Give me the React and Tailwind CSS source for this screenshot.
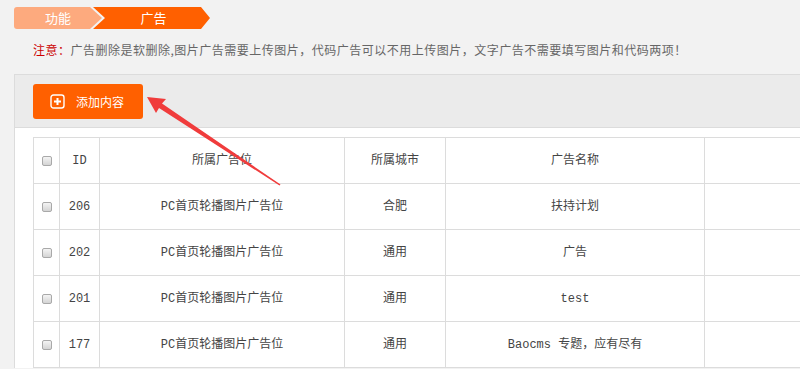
import React from 'react'

const rows = [
  { id: '206', pos: 'PC首页轮播图片广告位', city: '合肥', name: '扶持计划' },
  { id: '202', pos: 'PC首页轮播图片广告位', city: '通用', name: '广告' },
  { id: '201', pos: 'PC首页轮播图片广告位', city: '通用', name: 'test' },
  { id: '177', pos: 'PC首页轮播图片广告位', city: '通用', name: 'Baocms 专题，应有尽有' },
]

const Check = () => (
  <div className="mx-auto h-[10px] w-[10px] rounded-[2px] border border-[#a9a9a9] bg-gradient-to-b from-[#f4f4f4] to-[#d4d4d4]" />
)

const cell = 'border border-[#dcdcdc] text-center align-middle'

const App = () => {
  return (
    <div className="relative h-[369px] w-[800px] overflow-hidden bg-[#f2f2f2] font-['Noto_Sans_CJK_SC',sans-serif] text-[12px]">
      {/* breadcrumb */}
      <div className="flex pl-[14px] pt-[7px]">
        <div className="flex h-[22px] w-[88px] items-center rounded-l-[3px] bg-[#fdaa7e] pl-[31px] text-[13px] text-white [clip-path:polygon(0_0,76px_0,100%_50%,76px_100%,0_100%)]">
          功能
        </div>
        <div className="-ml-[9px] flex h-[22px] w-[117px] items-center justify-center bg-[#ff6000] pl-[4px] text-[13px] text-white [clip-path:polygon(0_0,108px_0,100%_50%,108px_100%,0_100%,12px_50%)]">
          广告
        </div>
      </div>

      {/* notice */}
      <div className="mt-[12px] pl-[33px] leading-[18px] tracking-[0.5px] text-[#666]">
        <span className="text-[#cc0000]">注意：</span>
        广告删除是软删除,图片广告需要上传图片，代码广告可以不用上传图片，文字广告不需要填写图片和代码两项！
      </div>

      {/* panel */}
      <div className="ml-[14px] mt-[15px] w-[900px] border-l border-t border-[#dcdcdc] bg-white">
        <div className="border-b border-[#dcdcdc] bg-[#ebebeb] pb-[8px] pl-[18px] pt-[9px]">
          <button className="flex h-[35px] w-[110px] items-center rounded-[3px] bg-[#ff6000] pl-[17px] text-[12px] text-white">
            <svg width="15" height="15" viewBox="0 0 15 15" fill="none" stroke="white">
              <rect x="1" y="1" width="13" height="13" rx="2.5" strokeWidth="1.4" />
              <path d="M7.5 4v7M4 7.5h7" strokeWidth="2" />
            </svg>
            <span className="ml-[11px]">添加内容</span>
          </button>
        </div>

        <div className="pl-[18px] pt-[9px]">
          <table className="w-[880px] table-fixed border-collapse font-['Liberation_Mono','Noto_Sans_CJK_SC',monospace] text-[12px] text-[#444]">
            <colgroup>
              <col className="w-[26px]" />
              <col className="w-[40px]" />
              <col className="w-[245px]" />
              <col className="w-[101px]" />
              <col className="w-[259px]" />
              <col />
            </colgroup>
            <thead>
              <tr className="h-[46px]">
                <th className={`${cell} font-normal`}>
                  <Check />
                </th>
                <th className={`${cell} font-normal`}>ID</th>
                <th className={`${cell} font-normal`}>所属广告位</th>
                <th className={`${cell} font-normal`}>所属城市</th>
                <th className={`${cell} font-normal`}>广告名称</th>
                <th className={`${cell} font-normal`}></th>
              </tr>
            </thead>
            <tbody>
              {rows.map((r) => (
                <tr key={r.id} className="h-[46px]">
                  <td className={cell}>
                    <Check />
                  </td>
                  <td className={cell}>{r.id}</td>
                  <td className={cell}>{r.pos}</td>
                  <td className={cell}>{r.city}</td>
                  <td className={cell}>{r.name}</td>
                  <td className={cell}></td>
                </tr>
              ))}
            </tbody>
          </table>
        </div>
      </div>

      {/* annotation arrow */}
      <svg className="pointer-events-none absolute left-0 top-0" width="800" height="369">
        <polygon
          points="147,97 166,99 162,103.5 280.5,184.5 279.5,185.5 159,108 156,113"
          fill="#f03c3c"
        />
      </svg>
    </div>
  )
}

export default App
